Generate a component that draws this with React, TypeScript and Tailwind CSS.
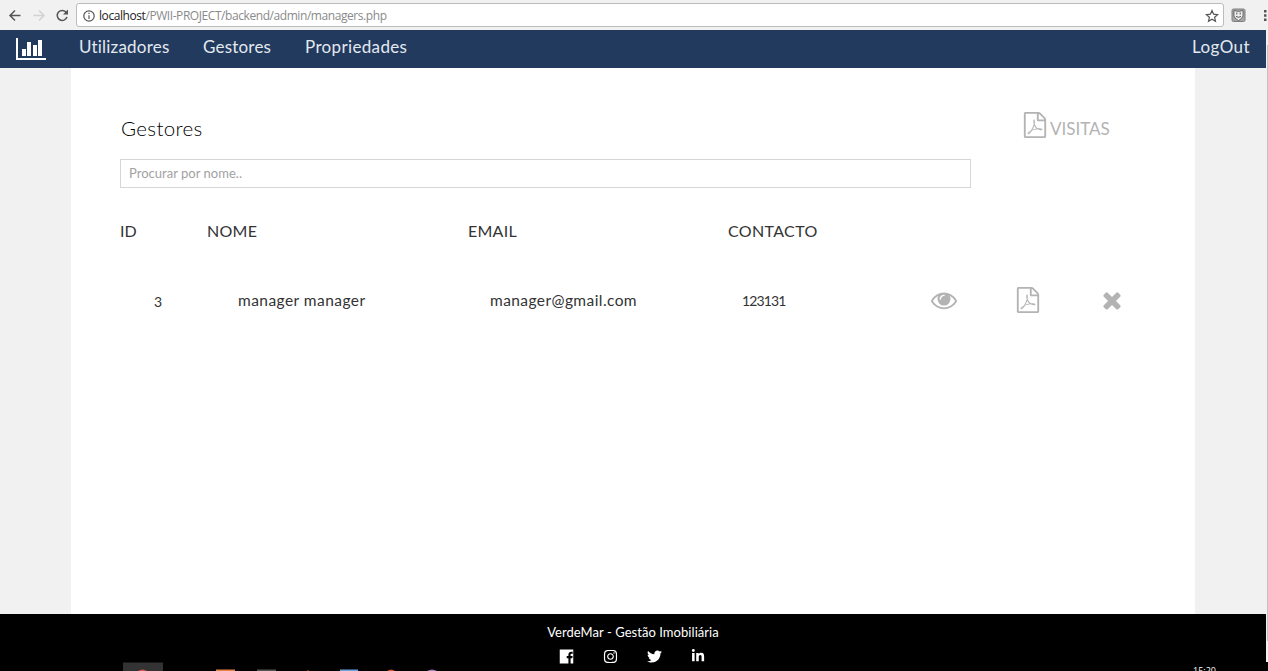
import React from 'react';
import { FaInstagram, FaTwitter, FaLinkedinIn } from 'react-icons/fa';

const PDF =
  'M1596 380q28 28 48 76t20 88v1152q0 40-28 68t-68 28h-1344q-40 0-68-28t-28-68v-1600q0-40 28-68t68-28h896q40 0 88 20t76 48zm-444-244v376h376q-10-29-22-41l-313-313q-12-12-41-22zm384 1528v-1024h-416q-40 0-68-28t-28-68v-416h-768v1536h1280zm-514-593q33 26 84 56 59-7 117-7 147 0 177 49 16 22 2 52 0 1-1 2l-2 2v1q-6 38-71 38-48 0-115-20t-130-53q-221 24-392 83-153 262-242 262-15 0-28-7l-24-12q-1-1-6-5-10-10-6-36 9-40 56-91.500t132-96.500q14-9 23 6 2 2 2 4 52-85 107-197 68-136 104-262-24-82-30.500-159.500t6.500-127.500q11-40 42-40h22q23 0 35 15 18 21 9 68-2 6-4 8 1 3 1 8v30q-2 123-14 192 55 164 146 238zm-576 411q52-24 137-158-51 40-87.500 84t-49.500 74zm398-920q-15 42-2 132 1-7 7-44 0-3 7-43 1-4 4-8-1-1-1-2-1-2-1-3-1-22-13-36 0 1-1 2v2zm-124 661q135-54 284-81-2-1-13-9.500t-16-13.500q-76-67-127-176-27 86-83 197-30 56-45 83zm646-16q-24-24-140-24 76 28 124 28 14 0 18-1 0-1-2-3z';
const EYE =
  'M1664 960q-152-236-381-353 61 104 61 225 0 185-131.500 316.500t-316.500 131.500-316.500-131.500-131.500-316.500q0-121 61-225-229 117-381 353 133 205 333.500 326.500t434.500 121.500 434.500-121.500 333.500-326.500zm-720-384q0-20-14-34t-34-14q-125 0-214.500 89.500t-89.500 214.500q0 20 14 34t34 14 34-14 14-34q0-86 61-147t147-61q20 0 34-14t14-34zm848 384q0 34-20 69-140 230-376.500 368.500t-499.500 138.500-499.500-139-376.500-368q-20-35-20-69t20-69q140-229 376.500-368t499.500-139 499.500 139 376.500 368q20 35 20 69z';
const TIMES =
  'M1490 1322q0 40-28 68l-136 136q-28 28-68 28t-68-28l-294-294-294 294q-28 28-68 28t-68-28l-136-136q-28-28-28-68t28-68l294-294-294-294q-28-28-28-68t28-68l136-136q28-28 68-28t68 28l294 294 294-294q28-28 68-28t68 28l136 136q28 28 28 68t-28 68l-294 294 294 294q28 28 28 68z';

function Glyph({ d }: { d: string }) {
  return (
    <svg viewBox="0 0 1792 1792" className="size-[26px] shrink-0 fill-[#b3b3b3]">
      <path d={d} />
    </svg>
  );
}

function BrowserBar() {
  return (
    <div className="flex h-[30px] shrink-0 items-center bg-[#f1f1f1]">
      <svg viewBox="0 0 76 30" className="h-[30px] w-[76px] fill-none stroke-[1.5]">
        <path d="M20.500 15.500H10M15 10.500l-5 5 5 5" className="stroke-[#555]" />
        <path d="M33.500 15.500H44M39 10.500l5 5-5 5" className="stroke-[#d2d2d2]" />
        <path d="M66.300 12.500a5 5 0 1 0 .7 4.500" className="stroke-[#555]" />
        <path d="M68 9.500v5h-5z" className="fill-[#555]" />
      </svg>
      <div className="flex h-[24px] w-[1148px] items-center rounded-[3px] border border-[#bcbcbc] bg-white">
        <svg viewBox="0 0 12 12" className="mt-px ml-[6px] size-[12px] fill-none stroke-[#555] stroke-[1.2]">
          <circle cx="6" cy="6" r="5.200" />
          <path d="M6 5.200V9M6 2.800v1.300" />
        </svg>
        <span className="mt-px ml-[4px] font-['Open_Sans',sans-serif] text-[12px] leading-[20px] tracking-[-0.43px] text-[#8a8a8a]">
          <span className="text-[#222]">localhost</span>/PWII-PROJECT/backend/admin/managers.php
        </span>
        <svg viewBox="0 0 14 14" className="mt-px mr-[4px] ml-auto size-[14px] fill-none stroke-[#555] stroke-[1.2]">
          <path d="M7 1.500l1.600 3.700 4 .4-3 2.700.9 4L7 10.200l-3.500 2.100.9-4-3-2.700 4-.4z" />
        </svg>
      </div>
      <svg viewBox="0 0 44 30" className="h-[30px] w-[44px]">
        <rect x="8" y="9" width="13" height="12.500" rx="1.500" fill="#a5a5a5" stroke="#808080" />
        <path d="M10 10.500l4.500 1 4.500-1v5.500q-1 3-4.500 4.500-3.500-1.500-4.500-4.500z" fill="#eee" stroke="#555" strokeWidth=".8" />
        <path d="M12.800 12.500v2M16.200 12.500v2M12 16.500q2.500 1.500 5 0" fill="none" stroke="#555" />
        <path d="M40 10h2.500v2.500H40zM40 14.200h2.500v2.500H40zM40 18.400h2.500v2.500H40z" fill="#555" />
      </svg>
    </div>
  );
}

function NavBar() {
  return (
    <nav className="flex h-[38px] w-[1266px] shrink-0 bg-[#213a5e] text-[17px] leading-[34px] text-[#e4e9ef]">
      <svg viewBox="0 0 30 23" className="mt-[7px] ml-[16px] h-[23px] w-[30px] fill-white">
        <path d="M0 1h2v20h28v2H0zM6 12h4v7H6zM11 5h4v14h-4zM17 8h4v11h-4zM22 3h4v16h-4z" />
      </svg>
      <a className="ml-[33px] w-[124px] tracking-[0.2px]">Utilizadores</a>
      <a className="w-[102px] tracking-[0.2px]">Gestores</a>
      <a className="tracking-[0.35px]">Propriedades</a>
      <a className="mr-[16px] ml-auto tracking-[0.4px]">LogOut</a>
    </nav>
  );
}

function Managers() {
  return (
    <main className="ml-[71px] flex w-[1124px] flex-col bg-white pl-[50px] text-black">
      <div className="flex h-[91px] items-start">
        <h1 className="mt-[45px] w-[903px] text-[20.500px] leading-[30px] font-light tracking-[0.35px]">Gestores</h1>
        <div className="mt-[44px] flex text-[#b3b3b3]">
          <div className="-ml-[2px]">
            <Glyph d={PDF} />
          </div>
          <span className="mt-[3px] ml-[2px] text-[17px] leading-[28px]">VISITAS</span>
        </div>
      </div>
      <input
        className="-ml-px h-[29px] w-[851px] border border-[#d6d6d6] px-[8px] pb-[2px] text-[13px] tracking-[0.02px] outline-none placeholder:text-[#a2a2a2]"
        placeholder="Procurar por nome.."
      />
      <div className="mt-[31px] grid grid-cols-[86px_261px_260px_1fr] text-[16px] leading-[24px] text-[#333]">
        <span className="-ml-px">ID</span>
        <span className="tracking-[0.25px]">NOME</span>
        <span className="tracking-[0.25px]">EMAIL</span>
        <span className="tracking-[0.35px]">CONTACTO</span>
      </div>
      <div className="mt-[43px] grid h-[28px] grid-cols-[84px_252px_252px_189px_84px_84px_1fr] items-center pl-[33px] text-[15.500px] leading-[24px] text-[#333]">
        <span className="pt-[3px] text-[14px]">3</span>
        <span className="tracking-[0.45px]">manager manager</span>
        <span className="tracking-[0.42px]">manager@gmail.com</span>
        <span className="pt-[2px] text-[14px] tracking-[-0.850px]">123131</span>
        <Glyph d={EYE} />
        <Glyph d={PDF} />
        <Glyph d={TIMES} />
      </div>
    </main>
  );
}

function Footer() {
  return (
    <footer className="relative flex h-[57px] shrink-0 flex-col items-center overflow-hidden bg-black pr-[2px] text-white">
      <p className="mt-[9px] text-[13px] leading-[18px] tracking-[0.05px]">VerdeMar - Gestão Imobiliária</p>
      <div className="mt-[8px] flex gap-[29px] pr-[2px]">
        <svg viewBox="0 0 14 14" className="size-[15px] fill-white">
          <path d="M.7.500h12.600v13H10.800V8.600h1.600l.3-2h-1.900V5.400c0-.7.300-1 1-1h1V2.600h-1.300c-1.800 0-2.700 1-2.700 2.600v1.400H7.200v2h1.600v4.900H.7z" />
        </svg>
        <FaInstagram className="size-[15px]" />
        <FaTwitter className="size-[15px]" />
        <FaLinkedinIn className="size-[14px]" />
      </div>
      <svg viewBox="0 0 320 9" className="absolute bottom-0 left-[123px] h-[9px] w-[320px]">
        <path d="M0 .500h40V9H0z" fill="#333" />
        <path d="M15 9q4.500-3 9 0z" fill="#d9544d" />
        <path d="M93 7.500h19V9H93z" fill="#e88345" />
        <path d="M134 7.500h19V9h-19z" fill="#555" />
        <path d="M183 9l3-1v1z" fill="#b8351c" />
        <path d="M217 7.500h18V9h-18z" fill="#6ba5dc" />
        <path d="M264 9q4-3 8 0z" fill="#e2502b" />
        <path d="M304 9q5-3 10 0z" fill="#a77bbf" />
      </svg>
      <span className="absolute top-[51px] left-[1193px] font-['Open_Sans',sans-serif] text-[9px] leading-[12px]">15:20</span>
    </footer>
  );
}

export default function App() {
  return (
    <div className="relative flex h-[671px] w-[1268px] flex-col overflow-hidden bg-[#f1f1f1] font-['Lato',sans-serif]">
      <BrowserBar />
      <NavBar />
      <div className="flex flex-1">
        <Managers />
      </div>
      <Footer />
      <div className="absolute top-[30px] right-0 h-[632px] w-[2px] bg-[#f1f1f1]">
        <div className="mt-[15px] ml-[1px] h-[596px] bg-[#c1c1c1]" />
      </div>
    </div>
  );
}
